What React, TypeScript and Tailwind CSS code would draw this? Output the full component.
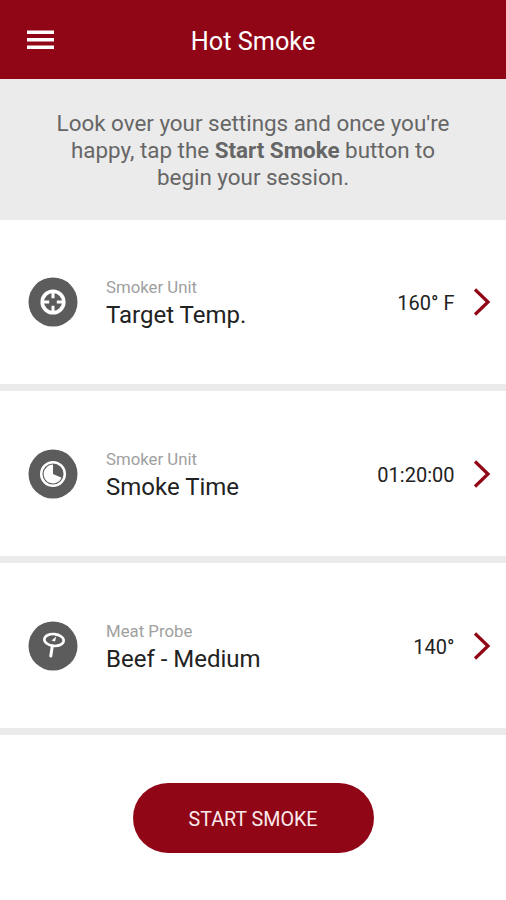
import React from "react";

type RowProps = { icon: React.ReactNode; label: string; title: string; value: string; height: string };

function Chevron() {
  return (
    <svg className="h-[28px] w-[18px]" viewBox="0 0 18 28" fill="none" stroke="#900617" strokeWidth="3.2">
      <path d="M2 1.5 L15 14 L2 26.5" />
    </svg>
  );
}

function Row({ icon, label, title, value, height }: RowProps) {
  return (
    <section className={`flex items-center border-b-[7px] border-[#ebebeb] bg-white pr-[15px] pl-[28px] ${height}`}>
      {icon}
      <div className="ml-[28px] flex-1 pt-[3px]">
        <div className="text-[16.8px] leading-[22px] text-[#a0a0a0]">{label}</div>
        <div className="pt-px text-[24px] leading-[32px] text-[#222]">{title}</div>
      </div>
      <div className="mr-[18.5px] pt-[2px] text-[20px] text-[#222]">{value}</div>
      <Chevron />
    </section>
  );
}

function Disc({ children }: { children: React.ReactNode }) {
  return (
    <svg className="h-[50px] w-[50px]" viewBox="0 0 50 50" fill="none">
      <circle cx="25" cy="25" r="24.5" fill="#5c5c5c" />
      {children}
    </svg>
  );
}

function TargetIcon() {
  return (
    <Disc>
      <circle cx="25" cy="25" r="10.8" stroke="#fff" strokeWidth="3.6" />
      <path d="M25 15v6.200M25 28.800v6.200M15 25h6.200M28.800 25h6.200" stroke="#fff" strokeWidth="3" />
    </Disc>
  );
}

function TimeIcon() {
  return (
    <Disc>
      <circle cx="25" cy="25" r="11.800" stroke="#fff" strokeWidth="2.500" />
      <path d="M25 25V15.600A9.400 9.400 0 1 0 33.600 28.800Z" fill="#fff" />
    </Disc>
  );
}

function ProbeIcon() {
  return (
    <Disc>
      <ellipse cx="26" cy="19" rx="9.700" ry="5.900" stroke="#fff" strokeWidth="2.600" transform="rotate(5 26 19)" />
      <path d="M24.300 25L22.800 35" stroke="#fff" strokeWidth="3" strokeLinecap="round" />
      <path d="M28.300 15.500L27 20.500L23.500 19.500Z" fill="#fff" />
    </Disc>
  );
}

export default function App() {
  return (
    <main className="flex h-[900px] w-[506px] flex-col bg-white font-['Roboto',sans-serif]">
      <header className="flex h-[79px] items-center bg-[#900617] px-[27px] text-white">
        <svg className="h-[20px] w-[27px]" viewBox="0 0 27 20" fill="#fff">
          <path d="M0 .5h27v3.500H0zM0 8h27v3.500H0zM0 15.500h27v3.500H0z" />
        </svg>
        <h1 className="flex-1 pt-[4px] pr-[27px] text-center text-[25.300px]">Hot Smoke</h1>
      </header>
      <p className="h-[141px] bg-[#ebebeb] pt-[31px] text-center text-[22.400px] leading-[27px] text-[#666]">
        Look over your settings and once you're
        <br />
        happy, tap the <b>Start Smoke</b> button to
        <br />
        begin your session.
      </p>
      <Row height="h-[171px]" label="Smoker Unit" title="Target Temp." value="160° F" icon={<TargetIcon />} />
      <Row height="h-[172px]" label="Smoker Unit" title="Smoke Time" value="01:20:00" icon={<TimeIcon />} />
      <Row height="h-[172px]" label="Meat Probe" title="Beef - Medium" value="140°" icon={<ProbeIcon />} />
      <button className="mx-auto mt-[48px] h-[70px] w-[241px] rounded-full bg-[#900617] pt-[3px] text-[19.700px] text-[#fbe9eb]">
        START SMOKE
      </button>
    </main>
  );
}
